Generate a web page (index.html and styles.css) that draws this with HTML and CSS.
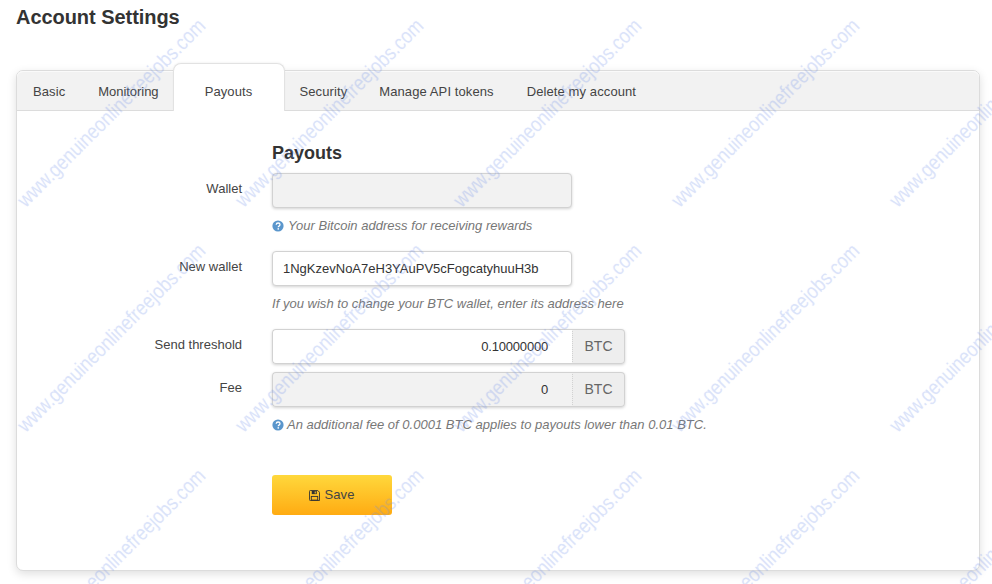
FILE: index.html
```html
<!DOCTYPE html>
<html lang="en">
<head>
<meta charset="utf-8">
<title>Account Settings</title>
<link rel="stylesheet" href="styles.css">
</head>
<body>
<div class="page">
  <h1 class="page-title">Account Settings</h1>
  <section class="panel">
    <nav class="tabs">
      <a class="tab tab-basic">Basic</a>
      <a class="tab tab-monitoring">Monitoring</a>
      <a class="tab tab-active">Payouts</a>
      <a class="tab tab-security">Security</a>
      <a class="tab tab-api">Manage API tokens</a>
      <a class="tab tab-delete">Delete my account</a>
    </nav>
    <form class="form">
      <h2 class="form-title">Payouts</h2>
      <div class="row row-wallet">
        <label class="label">Wallet</label>
        <div class="control">
          <div class="input input-wide input-disabled"></div>
          <p class="help"><svg class="help-icon" viewBox="0 0 12 12"><circle cx="6" cy="6" r="5.6" fill="#5a96cc"/><path d="M4.2 4.7C4.3 3.6 5 3 6.1 3c1.1 0 1.9.6 1.9 1.6 0 .8-.5 1.2-1 1.5-.5.3-.7.5-.7 1v.2" fill="none" stroke="#fff" stroke-width="1.3"/><rect x="5.5" y="8.2" width="1.5" height="1.4" fill="#fff"/></svg>Your Bitcoin address for receiving rewards</p>
        </div>
      </div>
      <div class="row row-new">
        <label class="label">New wallet</label>
        <div class="control">
          <div class="input input-wide">1NgKzevNoA7eH3YAuPV5cFogcatyhuuH3b</div>
          <p class="help">If you wish to change your BTC wallet, enter its address here</p>
        </div>
      </div>
      <div class="row row-send">
        <label class="label">Send threshold</label>
        <div class="control">
          <div class="group">
            <div class="input input-num">0.10000000</div>
            <div class="addon">BTC</div>
          </div>
        </div>
      </div>
      <div class="row row-fee">
        <label class="label">Fee</label>
        <div class="control">
          <div class="group">
            <div class="input input-num input-disabled">0</div>
            <div class="addon">BTC</div>
          </div>
          <p class="help"><svg class="help-icon help-icon-tight" viewBox="0 0 12 12"><circle cx="6" cy="6" r="5.6" fill="#5a96cc"/><path d="M4.2 4.7C4.3 3.6 5 3 6.1 3c1.1 0 1.9.6 1.9 1.6 0 .8-.5 1.2-1 1.5-.5.3-.7.5-.7 1v.2" fill="none" stroke="#fff" stroke-width="1.3"/><rect x="5.5" y="8.2" width="1.5" height="1.4" fill="#fff"/></svg>An additional fee of 0.0001 BTC applies to payouts lower than 0.01 BTC.</p>
        </div>
      </div>
      <button class="save" type="button"><svg class="save-icon" viewBox="0 0 12 12"><path d="M1.5.5h8l2 2v9h-10a1 1 0 0 1-1-1v-9a1 1 0 0 1 1-1z" fill="none" stroke="#333" stroke-width="1"/><rect x="3" y="1" width="5.5" height="3.5" fill="#333"/><rect x="6.2" y="1.6" width="1.2" height="2.2" fill="#ffc52a"/><rect x="2.5" y="7" width="7" height="4" fill="none" stroke="#333"/></svg>Save</button>
    </form>
  </section>
</div>
<div class="watermarks" aria-hidden="true">
  <span>www.genuineonlinefreejobs.com</span><span>www.genuineonlinefreejobs.com</span><span>www.genuineonlinefreejobs.com</span><span>www.genuineonlinefreejobs.com</span><span>www.genuineonlinefreejobs.com</span>
  <span>www.genuineonlinefreejobs.com</span><span>www.genuineonlinefreejobs.com</span><span>www.genuineonlinefreejobs.com</span><span>www.genuineonlinefreejobs.com</span><span>www.genuineonlinefreejobs.com</span>
  <span>www.genuineonlinefreejobs.com</span><span>www.genuineonlinefreejobs.com</span><span>www.genuineonlinefreejobs.com</span><span>www.genuineonlinefreejobs.com</span><span>www.genuineonlinefreejobs.com</span>
</div>
</body>
</html>
```
FILE: styles.css
```css
* { box-sizing: border-box; }
html, body { margin: 0; height: 100%; overflow: hidden; background: #fff; }
body { font-family: "Liberation Sans", Arial, sans-serif; color: #333; font-size: 13px; position: relative; }
.page { padding: 6px 12px 0 16px; }
.page-title { margin: 0; font-size: 20px; line-height: 22px; font-weight: 700; color: #333; letter-spacing: -.05px; }
.panel { margin-top: 42px; height: 501px; border: 1px solid #dcdcdc; border-radius: 7px; background: #fff; box-shadow: 0 3px 10px rgba(0,0,0,.13); }
.tabs { display: flex; height: 40px; background: #f2f2f2; border-bottom: 1px solid #dcdcdc; border-radius: 6px 6px 0 0; box-shadow: inset 0 1px 0 #fafafa; }
.tab { display: block; line-height: 41px; color: #444; text-align: center; white-space: nowrap; letter-spacing: .1px; }
.tab-basic { margin-left: 16px; }
.tab-monitoring { margin-left: 33px; letter-spacing: -.05px; }
.tab-active { width: 112px; height: 48px; margin: -8px 0 -1px 14px; line-height: 55px; background: #fff; border: 1px solid #e2e2e2; border-bottom: 0; border-radius: 8px 8px 0 0; box-shadow: 0 -1px 2px rgba(0,0,0,.04); }
.tab-security { margin-left: 15px; }
.tab-api { margin-left: 32px; }
.tab-delete { margin-left: 33px; }
.form { padding: 31px 0 0 255px; }
.form-title { margin: 0 0 9px; font-size: 18px; line-height: 22px; font-weight: 700; }
.row { display: flex; position: relative; }
.label { position: absolute; right: 100%; margin-right: 30px; top: 8px; line-height: 16px; white-space: nowrap; color: #444; }
.row-wallet { height: 78px; }
.row-new { height: 78px; }
.row-send { height: 43px; }
.row-fee { height: 103px; }
.input { height: 35px; line-height: 33px; border: 1px solid #d2d2d2; border-radius: 4px; background: #fff; padding: 0 10px; color: #333; box-shadow: 0 1px 3px rgba(0,0,0,.18); font-size: 13px; }
.input-wide { width: 300px; }
.input-disabled { background: #f2f2f2; }
.group { display: flex; width: 353px; height: 35px; border-radius: 4px; box-shadow: 0 1px 3px rgba(0,0,0,.18); }
.input-num { flex: 1; text-align: right; padding-right: 24px; border-right: 0; border-radius: 4px 0 0 4px; box-shadow: none; letter-spacing: -.2px; }
.addon { width: 53px; height: 35px; line-height: 33px; font-size: 14px; text-align: center; background: #eee; color: #666; border: 1px solid #d2d2d2; border-left: 1px dotted #d2d2d2; border-radius: 0 4px 4px 0; }
.help { margin: 10px 0 0; line-height: 16px; font-style: italic; color: #777; font-size: 13px; display: flex; align-items: center; white-space: nowrap; letter-spacing: .02px; }
.help-icon { width: 12px; height: 12px; margin-right: 4px; flex: none; }
.help-icon-tight { margin-right: 3px; }
.save { display: flex; align-items: center; justify-content: center; width: 120px; height: 40px; padding: 0 0 2px; border: 0; border-radius: 3px; background: linear-gradient(#ffd83c, #ffab12); color: #444; font: 13px "Liberation Sans", Arial, sans-serif; letter-spacing: .1px; }
.save-icon { width: 11px; height: 11px; margin: 2px 4px 0 0; }
.watermarks { position: absolute; left: 0; top: 0; width: 992px; height: 584px; overflow: hidden; pointer-events: none; display: grid; grid-template-columns: repeat(5, 218px); grid-auto-rows: 225px; padding: 0 0 0 2px; }
.watermarks span { display: flex; align-items: center; justify-content: center; transform: rotate(-45deg) scaleX(.85); font-size: 21px; color: rgba(110,145,235,.14); text-shadow: 0 0 1px rgba(110,145,235,.16); white-space: nowrap; font-family: "Liberation Sans", sans-serif; }
```
